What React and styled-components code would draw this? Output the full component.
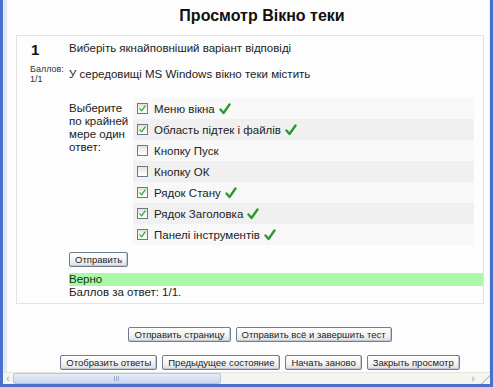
import React from 'react';
import styled, { createGlobalStyle } from 'styled-components';

const options = [
  { label: 'Меню вікна', checked: true },
  { label: 'Область підтек і файлів', checked: true },
  { label: 'Кнопку Пуск', checked: false },
  { label: 'Кнопку ОК', checked: false },
  { label: 'Рядок Стану', checked: true },
  { label: 'Рядок Заголовка', checked: true },
  { label: 'Панелі інструментів', checked: true },
];

const Tick = ({ size = 12, color = '#2b9b2b', width = 2.4 }) => (
  <svg width={size} height={size} viewBox="0 0 12 12">
    <path d="M1.5 6.5 L4.5 10 L10.5 1.5" fill="none" stroke={color} strokeWidth={width} strokeLinecap="round" strokeLinejoin="round" />
  </svg>
);

const App = () => {
  return (
    <>
      <GlobalStyle />
      <Frame>
        <Page>
          <Title>Просмотр Вікно теки</Title>
          <QuestionBox>
            <Info>
              <Number>1</Number>
              <Grade>Баллов:<br />1/1</Grade>
            </Info>
            <Content>
              <Question>Виберіть якнайповніший варіант відповіді</Question>
              <Question>У середовищі MS Windows вікно теки містить</Question>
              <Answer>
                <Prompt>Выберите по крайней мере один ответ:</Prompt>
                <Options>
                  {options.map((o, i) => (
                    <Option key={i} odd={i % 2 === 1}>
                      <Box>{o.checked && <Tick size={7} color="#31a931" width={2} />}</Box>
                      <span>{o.label}</span>
                      {o.checked && <Tick />}
                    </Option>
                  ))}
                </Options>
              </Answer>
              <SubmitRow>
                <Button>Отправить</Button>
              </SubmitRow>
              <Correct>Верно</Correct>
              <Score>Баллов за ответ: 1/1.</Score>
            </Content>
          </QuestionBox>
          <ButtonRow>
            <Button>Отправить страницу</Button>
            <Button>Отправить всё и завершить тест</Button>
          </ButtonRow>
          <ButtonRow>
            <Button>Отобразить ответы</Button>
            <Button>Предыдущее состояние</Button>
            <Button>Начать заново</Button>
            <Button>Закрыть просмотр</Button>
          </ButtonRow>
        </Page>
        <Scrollbar>
          <Arrow>‹</Arrow>
          <Thumb><Grip /></Thumb>
          <Track />
          <Arrow>›</Arrow>
          <SizeGrip />
        </Scrollbar>
      </Frame>
    </>
  );
};

export default App;

const GlobalStyle = createGlobalStyle`
  html, body {
    margin: 0;
    padding: 0;
    background: #fff;
  }
  body {
    font-family: "Liberation Sans", Arial, sans-serif;
    font-size: 11.5px;
    color: #222;
  }
`;

const Frame = styled.div`
  width: 493px;
  height: 387px;
  box-sizing: border-box;
  display: flex;
  flex-direction: column;
  border-left: 3px solid #4a70cf;
  border-right: 3px solid #4a70cf;
  border-bottom: 3px solid #4a70cf;
  background: #fdfdfd;
  overflow: hidden;
`;

const Page = styled.div`
  flex: 1;
  min-height: 0;
  display: flex;
  flex-direction: column;
  border-left: 4px solid #e4e8ef;
  border-right: 1px solid #e4e8ef;
  overflow: hidden;

  & > * {
    flex-shrink: 0;
  }
`;

const Title = styled.h2`
  margin: 6px 0 0 0;
  padding-left: 28px;
  text-align: center;
  font-size: 16px;
  font-weight: bold;
  color: #111;
  height: 29px;
  line-height: 19px;
`;

const QuestionBox = styled.div`
  margin: 0 5px 0 9px;
  border: 1px solid #e2e2e2;
  display: grid;
  grid-template-columns: 51px 1fr;
  padding: 5px 0 4px 0;
`;

const Info = styled.div`
  padding-left: 14px;
`;

const Number = styled.div`
  font-size: 15px;
  font-weight: bold;
  color: #111;
  height: 23px;
  line-height: 18px;
`;

const Grade = styled.div`
  font-size: 9px;
  line-height: 10px;
  color: #333;
  margin-left: -1px;
`;

const Content = styled.div`
  display: flex;
  flex-direction: column;
  padding-left: 1px;
`;

const Question = styled.div`
  font-size: 11.5px;
  line-height: 14px;
  margin-bottom: 12px;
  color: #222;

  & + & {
    margin-bottom: 17px;
  }
`;

const Answer = styled.div`
  display: flex;
  margin-right: 9px;
`;

const Prompt = styled.div`
  width: 64px;
  font-size: 11.5px;
  line-height: 13px;
  padding-top: 4px;
`;

const Options = styled.div`
  flex: 1;
  display: flex;
  flex-direction: column;
`;

const Option = styled.div`
  height: 21px;
  display: flex;
  align-items: center;
  gap: 4px;
  padding-left: 4px;
  font-size: 11.5px;
  color: #222;
  background: ${p => (p.odd ? '#f0f0f0' : '#f8f8f8')};
`;

const Box = styled.span`
  width: 9px;
  height: 9px;
  border: 1px solid #6a7a8c;
  background: linear-gradient(#e4e4de, #ffffff);
  display: inline-flex;
  align-items: center;
  justify-content: center;
  margin-right: 2px;
`;

const SubmitRow = styled.div`
  margin-top: 7px;
  height: 20px;
`;

const Button = styled.button`
  font-family: "Liberation Sans", Arial, sans-serif;
  font-size: 9.5px;
  color: #222;
  height: 15px;
  padding: 0 5px;
  line-height: 13px;
  border: 1px solid #6f7d90;
  border-radius: 2px;
  background: linear-gradient(#ffffff, #f2f2f0 60%, #d9dde6);
  box-shadow: inset -1px -1px 0 #c2c8d4;
  cursor: pointer;
`;

const Correct = styled.div`
  margin-top: 1px;
  background: #a9f9a9;
  font-size: 11.5px;
  line-height: 13px;
  color: #113311;
`;

const Score = styled.div`
  font-size: 11.5px;
  line-height: 13px;
  color: #222;
`;

const ButtonRow = styled.div`
  display: flex;
  justify-content: center;
  gap: 5px;
  padding-left: 24px;
  margin-top: 23px;

  & + & {
    margin-top: 13px;
  }
`;

const Scrollbar = styled.div`
  height: 11px;
  flex-shrink: 0;
  display: flex;
  align-items: stretch;
  background: #f4f4f1;
  border-top: 1px solid #e6e6e0;
`;

const Arrow = styled.div`
  width: 10px;
  font-size: 10px;
  line-height: 11px;
  text-align: center;
  color: #8fa0c0;
`;

const Thumb = styled.div`
  width: 206px;
  display: flex;
  align-items: center;
  justify-content: center;
  background: linear-gradient(#e6edf8, #c9d6ee);
  border: 1px solid #b7c4dc;
  border-radius: 2px;
`;

const Grip = styled.div`
  width: 6px;
  height: 5px;
  background: repeating-linear-gradient(90deg, #9aaccc 0 1px, transparent 1px 2px);
`;

const Track = styled.div`
  flex: 1;
`;

const SizeGrip = styled.div`
  width: 12px;
  background: linear-gradient(135deg, transparent 60%, #c8c8c0 60% 66%, transparent 66%);
`;
